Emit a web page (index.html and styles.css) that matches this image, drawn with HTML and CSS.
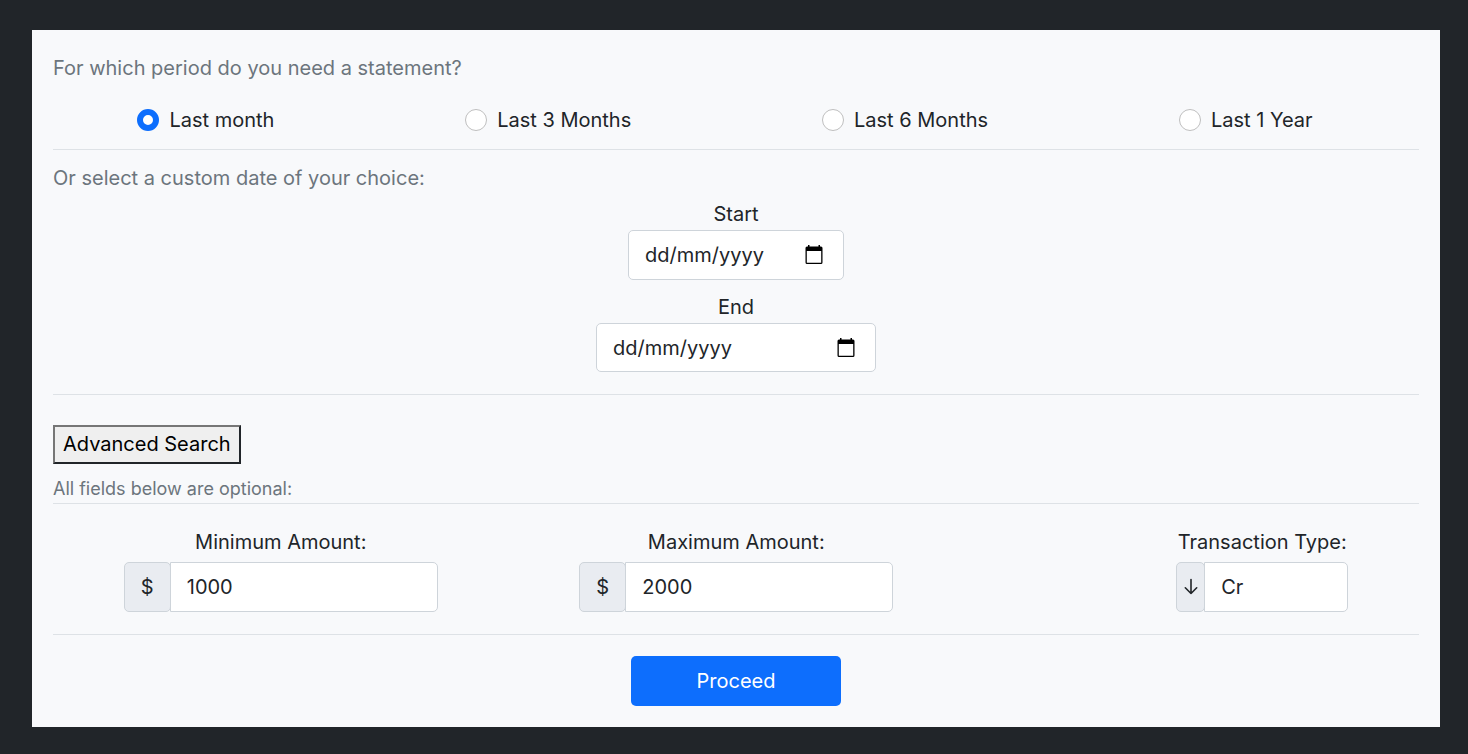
FILE: index.html
```html
<!DOCTYPE html>
<html lang="en-GB">
<head>
<meta charset="utf-8">
<meta name="viewport" content="width=device-width, initial-scale=1">
<title>Account statement</title>
<link rel="stylesheet" href="styles.css">
</head>
<body>
<form class="panel">
  <fieldset class="period">
    <legend class="lead">For which period do you need a statement?</legend>
    <div class="options">
      <label class="option"><input class="radio" type="radio" name="period" checked><span>Last month</span></label>
      <label class="option"><input class="radio" type="radio" name="period"><span>Last 3 Months</span></label>
      <label class="option"><input class="radio" type="radio" name="period"><span>Last 6 Months</span></label>
      <label class="option"><input class="radio" type="radio" name="period"><span>Last 1 Year</span></label>
    </div>
  </fieldset>

  <section class="custom">
    <p class="lead">Or select a custom date of your choice:</p>
    <div class="dates">
      <div class="date-field">
        <label for="start">Start</label>
        <div class="date-box date-start">
          <input id="start" class="date-input" type="text" value="dd/mm/yyyy">
          <button class="date-button" type="button" aria-label="Pick start date">
            <svg class="calendar" viewBox="0 0 18 20" aria-hidden="true"><path fill="currentColor" fill-rule="evenodd" d="M3 0h1.500v1.500h9V0H15v1.500h1a1.500 1.500 0 0 1 1.500 1.500v14.500A1.500 1.500 0 0 1 16 19H2a1.500 1.500 0 0 1-1.500-1.500V3A1.500 1.500 0 0 1 2 1.500h1zM1.800 6v11.700h14.400V6z"/></svg>
          </button>
        </div>
      </div>
      <div class="date-field">
        <label for="end">End</label>
        <div class="date-box date-end">
          <input id="end" class="date-input" type="text" value="dd/mm/yyyy">
          <button class="date-button" type="button" aria-label="Pick end date">
            <svg class="calendar" viewBox="0 0 18 20" aria-hidden="true"><path fill="currentColor" fill-rule="evenodd" d="M3 0h1.500v1.500h9V0H15v1.500h1a1.500 1.500 0 0 1 1.500 1.500v14.500A1.500 1.500 0 0 1 16 19H2a1.500 1.500 0 0 1-1.500-1.500V3A1.500 1.500 0 0 1 2 1.500h1zM1.800 6v11.700h14.400V6z"/></svg>
          </button>
        </div>
      </div>
    </div>
  </section>

  <section class="advanced">
    <button class="toggle" type="button">Advanced Search</button>
    <p class="hint">All fields below are optional:</p>
  </section>

  <section class="filters">
    <div class="filter">
      <label for="min">Minimum Amount:</label>
      <div class="group"><span class="addon">$</span><input id="min" class="control amount" type="text" value="1000"></div>
    </div>
    <div class="filter">
      <label for="max">Maximum Amount:</label>
      <div class="group"><span class="addon">$</span><input id="max" class="control amount" type="text" value="2000"></div>
    </div>
    <div></div>
    <div class="filter">
      <label for="type">Transaction Type:</label>
      <div class="group">
        <span class="addon addon-slim"><svg class="arrow" viewBox="0 0 14 18" aria-hidden="true"><path d="M7 1.500v14M1.300 9.800L7 15.500l5.700-5.700" fill="none" stroke="currentColor" stroke-width="1.600" stroke-linecap="round" stroke-linejoin="round"/></svg></span>
        <select id="type" class="control type"><option>Cr</option><option>Dr</option></select>
      </div>
    </div>
  </section>

  <div class="actions"><button class="proceed" type="submit">Proceed</button></div>
</form>
</body>
</html>
```
FILE: styles.css
```css
* { box-sizing: border-box; }

body {
  margin: 0;
  padding: 30px 28px 27px 32px;
  background: #212529;
  color: #212529;
  font: 400 20px/32px Inter, "Liberation Sans", sans-serif;
}

input, select, button { font: inherit; color: inherit; margin: 0; }
p { margin: 0; }

.panel { padding: 21px; background: #f8f9fb; }

.period { margin: 0; padding: 0 0 13px; border: 0; border-bottom: 1px solid #dee2e6; }
.lead { padding: 0; color: #6c757d; line-height: 34px; }

.options { display: flex; justify-content: space-around; padding-top: 19px; }
.option { display: flex; align-items: center; gap: 10px; margin-right: 22px; }

.radio {
  appearance: none;
  width: 22px;
  height: 22px;
  border: 1px solid #bfbfbf;
  border-radius: 50%;
  background: #fff;
}
.radio:checked { border: 6px solid #0d6efd; }

.custom { padding: 11px 0 22px; border-bottom: 1px solid #dee2e6; }
.dates { display: flex; flex-direction: column; align-items: center; gap: 11px; padding-top: 3px; }
.date-field { display: flex; flex-direction: column; align-items: center; }
.date-box {
  display: flex;
  align-items: center;
  height: 49px;
  padding: 0 20px 0 16px;
  border: 1px solid #ced4da;
  border-radius: 5px;
  background: #fff;
}
.date-start { width: 216px; height: 50px; }
.date-end { width: 280px; }
.date-input { flex: 1; min-width: 0; padding: 0; border: 0; background: none; }
.date-button { display: flex; padding: 0; border: 0; background: none; color: #000; }
.calendar { width: 18px; height: 20px; }

.advanced { padding-top: 30px; border-bottom: 1px solid #dee2e6; }
.toggle {
  display: block;
  padding: 1px 8px 2px;
  border: 2px solid;
  border-color: #767676 #212529 #212529 #767676;
  background: #efefef;
  color: #000;
}
.hint { padding-top: 11px; color: #6c757d; font-size: 18px; line-height: 28px; }

.filters {
  display: flex;
  justify-content: space-around;
  padding: 22px 0;
  border-bottom: 1px solid #dee2e6;
}
.filter { display: flex; flex-direction: column; align-items: center; gap: 4px; }
.group { display: flex; }
.addon {
  display: flex;
  align-items: center;
  justify-content: center;
  width: 47px;
  border: 1px solid #ced4da;
  border-radius: 5px;
  background: #e9ecf1;
}
.addon-slim { width: 29px; }
.arrow { width: 14px; height: 18px; }
.control {
  appearance: none;
  height: 50px;
  margin-left: -1px;
  padding: 0 16px;
  border: 1px solid #ced4da;
  border-radius: 0 5px 5px 0;
  background: #fff;
}
.amount { width: 268px; }
.type { width: 144px; }

.actions { display: flex; justify-content: center; padding-top: 21px; }
.proceed {
  width: 210px;
  height: 50px;
  padding: 0;
  border: 0;
  border-radius: 5px;
  background: #0d6efd;
  color: #fff;
}
```
